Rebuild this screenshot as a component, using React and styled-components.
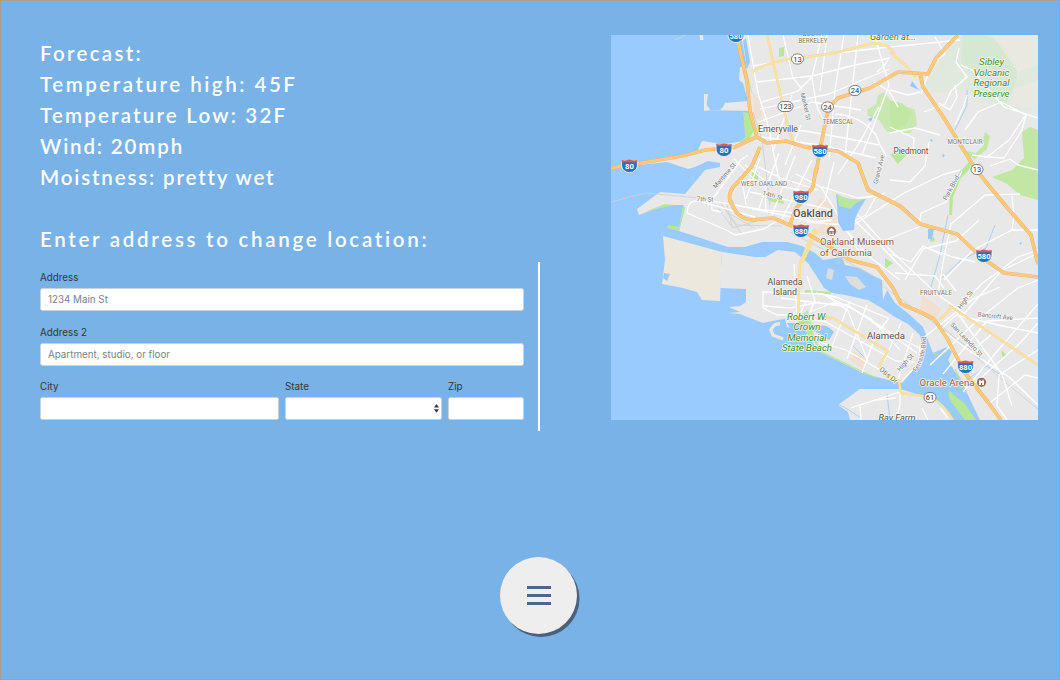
import React from "react";
import styled, { createGlobalStyle } from "styled-components";

const Global = createGlobalStyle`
  * { box-sizing: border-box; }
  body { margin: 0; background: #78b2e6; }
`;

const Page = styled.main`
  height: 680px;
  overflow: hidden;
  border: 1px solid #a0a0a0;
  background: #78b2e6;
  display: flex;
  flex-direction: column;
  justify-content: space-between;
  padding: 34px 21px 45px 39px;
  font-family: Inter, "Liberation Sans", sans-serif;
`;

const Columns = styled.div`
  display: flex;
  justify-content: space-between;
  align-items: flex-start;
`;

const LeftColumn = styled.section`
  width: 500px;
  padding-top: 3px;
`;

const Forecast = styled.div`
  height: 186px;
`;

const Line = styled.p`
  margin: 0;
  height: 31px;
  line-height: 31px;
  white-space: nowrap;
  color: #fff;
  font-family: Chalkduster, Lato, sans-serif;
  font-size: 20.5px;
  font-weight: 600;
  letter-spacing: ${(p) => p.$spacing}px;
`;

const Form = styled.form`
  margin-top: 7px;
  height: 169px;
  padding: 9px 14px 0 0;
  border-right: 2px solid #fff;
  display: flex;
  flex-direction: column;
  gap: 8.7px;
`;

const FieldRow = styled.div`
  display: grid;
  grid-template-columns: 239px 157px 76px;
  gap: 6px;
`;

const Field = styled.label`
  display: block;
  height: 46px;
  font-size: 9.8px;
  line-height: 13px;
  color: #353739;
`;

const Input = styled.input`
  display: block;
  width: 100%;
  height: 23px;
  margin-top: 4px;
  padding: 0 7px;
  border: 1px solid #c9d3dc;
  border-radius: 2.5px;
  background: #fff;
  font: 9.8px Inter, sans-serif;
  color: #464a4c;
  &::placeholder { color: #79838c; opacity: 1; }
`;

const SelectBox = styled.div`
  height: 23px;
  margin-top: 4px;
  padding-right: 2px;
  border: 1px solid #c9d3dc;
  border-radius: 2.5px;
  background: #fff;
  display: flex;
  align-items: center;
  justify-content: flex-end;
`;

const MapFrame = styled.div`
  width: 427px;
  height: 385px;
  overflow: hidden;
  svg { display: block; font-family: Roboto, sans-serif; }
`;

const Footer = styled.div`
  padding-left: 460px;
`;

const MenuButton = styled.button`
  display: grid;
  width: 77px;
  height: 77px;
  padding: 0;
  border: 0;
  border-radius: 50%;
  background: #eee;
  box-shadow: 2.5px 3px 0 #4b607a;
  place-content: center;
  gap: 4.6px;
`;

const Bar = styled.span`
  width: 24px;
  height: 3px;
  background: #4f6580;
`;

const minor = [
  "M748 35 L758 93 768 125 779 180", "M783 35 L793 78 M793 78 L802 89", "M753 66 L803 57 880 48 960 40",
  "M757 82 L812 76 855 65 890 58", "M762 102 L798 91 812 77 816 103 818 109 826 125", "M812 77 L822 35 M827 35 L820 91",
  "M844 35 L835 90 829 160", "M858 35 L850 110 845 155", "M876 40 L889 85 879 112 862 155", "M760 109 L829 94 889 69",
  "M759 122 L812 102 861 110", "M773 151 L792 95 M785 165 L801 125", "M760 127 L805 131 850 139 879 145",
  "M761 137 L820 145 876 158", "M835 114 Q862 116 876 135 L880 145 886 155 879 166", "M879 107 L858 145 838 174",
  "M745 165 L765 181 766 210", "M734 159 L758 183 M741 174 L746 205", "M735 205 L815 222 832 220",
  "M746 199 L760 158 M758 211 L779 153", "M772 215 L795 156 M782 219 L812 160", "M752 164 L781 178 818 190",
  "M748 179 L804 191 M750 192 L833 210", "M796 174 L821 187 835 210 861 255", "M834 162 L825 200 807 221",
  "M822 187 L858 198 876 196", "M807 222 L846 225 866 215 875 198 885 193", "M838 220 L867 255 900 280",
  "M844 210 L875 240 909 275", "M850 206 L890 250 938 295 964 313", "M855 224 L904 193 942 175 960 170",
  "M885 240 L919 227 921 213 946 202 962 171", "M938 295 L943 262 951 224 985 195 1020 194", "M890 254 L911 262 923 246 942 255",
  "M905 280 L923 249 956 241 979 220", "M895 273 L935 276 944 288", "M944 280 L973 250 1012 230 1038 230",
  "M924 247 L953 257 975 262", "M955 310 L984 282 1018 257 1038 250", "M943 274 L956 291",
  "M964 314 L1001 271 1038 253", "M930 365 L980 318 1018 288 1038 280", "M1012 230 L1014 216 1012 196",
  "M943 374 L987 321 1038 318", "M963 392 L999 349 1038 304", "M974 384 L1020 343 1038 323", "M923 338 L973 299 1000 287",
  "M940 330 L956 315 998 325 1038 333", "M941 329 L971 352 1009 377 1038 405", "M955 310 L1002 374 1012 406",
  "M999 375 L1038 350 M999 375 L997 406 1007 420", "M987 405 L1025 375 1038 378", "M970 353 L993 333",
  "M755 217 L702 202 Q688 197 687 213 L726 230 735 235 764 229 780 219", "M711 201 L765 210 826 216", "M711 201 L741 160 748 155 M711 200 L712 210 721 212",
  "M763 291 L763 308 777 315 800 314 806 301", "M794 264 L797 314", "M807 276 L815 301 809 314", "M764 292 L823 294 870 318 900 350",
  "M781 298 L850 307 893 334 923 350", "M764 306 L790 308 820 302", "M824 294 L848 311 868 362", "M810 312 L832 303 848 305 917 353",
  "M800 317 L826 322 896 361 915 362", "M816 293 L836 297 888 318", "M850 301 L831 349", "M867 305 L847 359", "M889 318 L876 335 862 373",
  "M901 323 L884 361 M913 333 L898 379", "M820 342 L846 350 899 381", "M902 381 L919 363 920 345",
  "M890 180 L910 182 925 166 929 142", "M890 90 L908 95 920 92",
  "M935 37 L945 54 932 63 921 94", "M959 48 L956 62 967 77 951 91 945 104 924 112", "M961 65 L972 70 1004 107 1038 118",
  "M967 95 L963 108 955 125", "M939 103 L950 110 957 97 955 85", "M965 130 L978 112 1001 102 1026 115 1022 130 1004 158 988 157",
  "M1025 116 L1009 140 987 157 972 155", "M990 166 L1010 159 1018 165 1038 170",
  "M888 60 Q883 68 877 72 M874 82 L889 91 898 107", "M890 133 L915 128 940 135", "M890 127 L914 138 913 154",
  "M860 405 L900 392 900 405 896 420", "M861 420 L860 406 M851 408 L875 400 896 398", "M922 408 L928 420 M940 408 L948 418"
];

const yellow = ["M767 35 L784 110 789 132 795 145", "M752 72 Q765 63 790 59 L835 53 873 43 Q888 44 895 53", "M890 52 L905 65 916 77",
  "M815 228 L800 263 798 317", "M818 230 L802 263", "M823 317 L833 318 884 349 888 351 879 366 881 370 899 381 901 393 930 397 Q944 404 953 420",
  "M939 320 L949 311 950 306 980 326 1038 365"];
const highways = [
  "M738 42 L747 81 750 111 757 137 767 143 786 141 805 147 818 149 838 151 858 163 868 190 900 206 920 224 957 234 980 256 1004 273 1038 277",
  "M611 168 L682 156 705 150 735 147 752 139 757 137",
  "M816 173 L820 150 826 119 830 106 838 98 870 88 898 72 928 74 936 58 958 35",
  "M920 74 L923 87 944 118 971 162 985 181 1010 211 1031 235 1038 264",
  "M731 204 Q726 192 738 182 L752 166 760 147",
  "M816 168 L813 187 795 210 790 225",
  "M731 201 Q736 219 753 220 L773 218 801 230 830 247 850 260 877 267 893 288 901 304 920 312 934 319 947 338 965 373 987 401 1001 420"
];

const Shield = ({ x, y, children }) => (
  <g transform={`translate(${x} ${y}) scale(1.1)`}>
    <path d="M-7-5 Q-8 2-5 4 Q-3 6 0 6 Q3 6 5 4 Q8 2 7-5Z" fill="#2871bd" stroke="#fff" strokeWidth=".7" />
    <path d="M-7-5.5 L-4-5 0-5.8 4-5 7-5.5 V-3.5 H-7Z" fill="#dc5854" />
    <text y="3" fontSize="7" fontWeight="700" textAnchor="middle" fill="#fff">{children}</text>
  </g>
);

const RoutePill = ({ x, y, w = 12, children }) => (
  <g transform={`translate(${x} ${y})`}>
    <rect x={-w / 2} y="-5" width={w} height="10" rx="5" fill="#fff" stroke="#666" strokeWidth=".8" />
    <text y="2.7" fontSize="7.5" textAnchor="middle" fill="#333">{children}</text>
  </g>
);

const Place = ({ x, y, size = 9.5, color = "#5c513c", angle = 0, italic, weight = 400, width, children }) => (
  <text transform={`translate(${x} ${y}) rotate(${angle})`} textAnchor="middle" fontSize={size}
    fontWeight={weight} fontStyle={italic ? "italic" : "normal"} fill={color} stroke="#f7f7f7"
    strokeWidth="1.5" paintOrder="stroke" strokeLinejoin="round"
    textLength={width} lengthAdjust="spacingAndGlyphs">{children}</text>
);

function OaklandMap() {
  return (
    <svg width="427" height="385" viewBox="611 35 427 385" aria-label="Oakland area map">
      <rect x="611" y="35" width="427" height="385" fill="#9acbff" />
      <path fill="#e8e8e8" d="M741 35 L747 68 740 67 739 80 743 83 748 101 725 103 723 107 720 110 710 110 705 102 708 94 705 94 704 110 750 111 751 123 750 133 743 141 720 145 715 143 702 141 698 150 688 154 611 168 667 162 685 160 695 167 708 161 720 163 720 167 705 170 685 194 660 192 637 209 639 215 665 205 683 205 685 208 679 231 728 247 745 247 762 242 787 242 802 246 815 253 823 260 842 257 845 265 860 268 872 275 882 280 883 300 887 290 895 303 910 315 923 327 929 343 933 353 947 347 952 352 948 360 955 372 960 377 967 393 980 420 1038 420 1038 35Z" />
      <path fill="#ece8dd" d="M663 236 L722 252 720 301 702 300 697 292 683 288 662 284 665 260Z M667 162 L686 159 695 167 688 169Z M704 94 L708 94 706 108 710 110 704 111Z" />
      <path fill="#e8e8e8" d="M722 252 L755 257 765 257 778 250 795 252 808 263 817 277 824 288 832 293 845 295 868 300 880 307 895 317 908 324 920 335 923 347 922 360 913 370 902 383 880 378 863 373 820 352 805 333 787 327 785 319 777 320 763 323 740 314 729 313 740 312 729 307 740 306 746 302 746 289 720 288Z M838 405 L842 402 860 389 900 389 937 400 953 420 850 420 848 412Z" />
      <path fill="#dcdede" d="M845 276 L857 277 866 287 859 290 850 284Z M828 268 L834 270 832 280 826 278Z" />

      <path fill="#c9e8b1" d="M867 110 L876 104 878 95 884 92 890 100 915 110 917 125 910 133 887 132 879 120 868 116Z" />
      <path fill="#dfeadd" d="M922 88 L940 61 952 45 963 35 1038 35 1038 110 1010 110 990 104 965 90 936 93Z" />
      <path fill="#c5e5bd" opacity=".35" d="M963 35 L985 35 Q1025 54 1015 85 L1004 108 961 63Z" />
      <path fill="#ebe9e4" opacity=".8" d="M992 35 H1038 V65 L1018 72Z M1016 88 L1038 80 1038 110 1008 105Z" />
      <path fill="#c0e8a2" d="M1022 132 L1030 127 1038 130 1038 200 1020 195 1007 184 992 177 1012 170 1024 158Z M890 101 L902 103 911 113 906 126 890 131Z M985 132 L990 136 987 149 975 159 963 153 966 151 976 153 984 145 983 140Z" />
      <path fill="#b8e798" d="M743 112 L750 113 754 130 749 140 740 142 745 137Z M683 205 L685 208 679 231 667 228 668 225 679 227Z M644 212 L665 204 675 205 660 208Z M779 48 L784 47 784 56 779 57Z M890 154 L909 152 898 164Z M969 162 L973 163 967 172 961 178 953 197 952 215 949 215 950 190 959 173Z M805 290 L832 292 831 294 805 294Z M797 320 L808 310 814 336 820 349 808 335Z M885 258 L893 263 885 269Z M948 390 L964 403 976 420 965 420 949 399Z M1001 350 L1007 355 1003 359Z M752 172 L758 173 758 180 751 178Z M764 192 L783 200 784 204 769 201Z M930 238 L934 237 935 241 930 242Z" />
      <path fill="none" stroke="#b5e595" strokeWidth="1.2" d="M820 351 L863 372 876 378 M933 353 L940 356 948 350 M955 369 L966 394" />
      <path fill="#f2ddca" opacity=".8" d="M753 92 L760 101 762 120 754 118Z M821 197 L834 207 837 225 820 222 812 209Z M853 351 L867 359 864 370 850 360Z M923 295 L941 309 937 318 920 310Z M813 233 L826 221 835 225 835 237Z" />
      <path fill="none" stroke="#ece8dd" strokeWidth="3.3" d="M780 324 Q774 323 771 330 L773 335 783 339 M701 35 L702 40" />
      <path fill="none" stroke="#a5ccf2" strokeWidth=".9" d="M948 215 L940 255 929 294 M995 225 L986 248 961 260 942 278 M967 90 L967 105 955 130 M833 402 L844 407 861 418 M887 394 L890 420 M965 381 L987 366 1004 377 M853 346 L864 357" />
      <g fill="none" stroke="#d0d1d2" strokeWidth=".9">
        <path d="M611 202 L645 193 700 198 727 204 732 227 M715 204 L733 228 760 220 M720 202 L741 233 M724 207 L737 225 782 226 M728 213 L755 228 M753 112 L762 140 770 205 M737 35 L752 93 M935 320 L1001 379 1038 409 M884 287 L972 350 M790 232 L872 275 M675 40 L686 35" />
      </g>
      <g fill="none" stroke="#fff" strokeWidth="1.3" strokeLinejoin="round">
        {minor.map((d) => <path key={d} d={d} />)}
      </g>
      <g fill="#99caff">
        <path d="M836 194 Q850 202 866 199 L859 210 855 219 854 230 843 231 838 222 837 204Z" />
        <path d="M928 229 L934 229 932 239 928 239Z M787 323 L804 323 807 334 792 332Z M813 330 Q824 320 834 332 L829 340Z M743 41 L746 38 750 62 747 69Z" />
        <path d="M912 81 L919 90 910 86Z M868 119 L873 117 871 122Z M664 273 L670 274 667 281 663 278Z M930 139 L933 140 931 142Z M942 154 L945 155 943 158Z M1019 243 L1022 242 1021 245Z" />
      </g>
      <path d="M837 194 Q851 202 865 199 L856 203 850 209 839 206Z" fill="#b9e6a0" />
      <g fill="none" strokeLinejoin="round">
        {yellow.map((d) => <g key={d}><path d={d} stroke="#f7d794" strokeWidth="2.4" /><path d={d} stroke="#fde49e" strokeWidth="1.4" /></g>)}
        {highways.map((d) => <g key={d}><path d={d} stroke="#f0b463" strokeWidth="3.7" /><path d={d} stroke="#ffcf83" strokeWidth="2.6" /><path d={d} stroke="#f4bb70" strokeWidth=".55" /></g>)}
      </g>

      <Shield x="736" y="36">580</Shield><Shield x="724" y="150">80</Shield><Shield x="629.5" y="166">80</Shield>
      <Shield x="820" y="151">580</Shield><Shield x="801" y="197">980</Shield><Shield x="801" y="231">880</Shield>
      <Shield x="984" y="256">580</Shield><Shield x="965.5" y="367">880</Shield>
      <RoutePill x="797.5" y="59">13</RoutePill><RoutePill x="785.5" y="106.5" w={15}>123</RoutePill>
      <RoutePill x="827.5" y="107">24</RoutePill><RoutePill x="855" y="90.5">24</RoutePill>
      <RoutePill x="977" y="169.5">13</RoutePill><RoutePill x="930" y="397.5">61</RoutePill>

      <Place x="813" y="36" size={6.5} color="#8d7558">SOUTH</Place>
      <Place x="813" y="43.2" size={6.5} color="#8d7558" width={29}>BERKELEY</Place>
      <Place x="893" y="39.6" size={9.5} color="#3b8b28" italic width={46}>Garden at...</Place>
      {["Sibley", "Volcanic", "Regional", "Preserve"].map((t, i) => <Place key={t} x="991.5" y={65.3 + i * 10.5} size={9.8} color="#3b8b28" italic width={[25, 36, 36, 36][i]}>{t}</Place>)}
      <Place x="778" y="131.5" width={40}>Emeryville</Place><Place x="911" y="153.5" width={35}>Piedmont</Place>
      <Place x="838" y="123.5" size={6.5} color="#8d7558" width={31}>TEMESCAL</Place>
      <Place x="965" y="144.3" size={6.5} color="#8d7558" width={35}>MONTCLAIR</Place>
      <Place x="764" y="185.5" size={6.5} color="#8d7558" width={46}>WEST OAKLAND</Place>
      <Place x="936" y="295" size={6.5} color="#8d7558" width={32}>FRUITVALE</Place>
      <Place x="813" y="217" size={11} weight={500} width={40}>Oakland</Place>
      <Place x="857" y="245.3" color="#8d5b42" width={74}>Oakland Museum</Place>
      <Place x="846" y="255.5" color="#8d5b42" width={52}>of California</Place>
      <Place x="785" y="285.3" width={35}>Alameda</Place><Place x="785" y="295" width={24}>Island</Place>
      <Place x="886" y="339" size={9.8} width={38}>Alameda</Place>
      {["Robert W.", "Crown", "Memorial", "State Beach"].map((t, i) => <Place key={t} x="807" y={319.5 + i * 10.6} size={9.8} color="#3b8b28" italic width={[40, 27, 39, 50][i]}>{t}</Place>)}
      <Place x="947" y="385.5" color="#8d5b42" width={55}>Oracle Arena</Place>
      <Place x="897" y="420.5" size={9.5} italic width={37}>Bay Farm</Place>
      <Place x="803.5" y="107" size={6.5} angle={77} color="#777">Market St</Place>
      <Place x="726" y="177" size={6.5} angle={-49} color="#777" width={31}>Maritime St</Place>
      <Place x="705" y="201.3" size={6.5} angle={2} color="#777">7th St</Place>
      <Place x="772" y="197.5" size={6.5} angle={16} color="#777">14th St</Place>
      <Place x="881" y="170" size={6.5} angle={-76} color="#777">Grand Ave</Place>
      <Place x="953" y="189" size={6.5} angle={-61} color="#777">Park Blvd</Place>
      <Place x="995" y="318.3" size={6.5} angle={6} color="#777" width={35}>Bancroft Ave</Place>
      <Place x="965" y="341" size={6.5} angle={47} color="#777">San Leandro St</Place>
      <Place x="967" y="301" size={6.5} angle={-53} color="#777">High St</Place>
      <Place x="907" y="364" size={6.5} angle={-48} color="#777">High St</Place>
      <path id="fernside" d="M916 372 Q927 359 926 330" fill="none" />
      <text fontSize="6.3" fill="#777" stroke="#f7f7f7" strokeWidth="1.2" paintOrder="stroke"><textPath href="#fernside">Fernside Blvd</textPath></text>
      <Place x="887" y="377" size={7} angle={39} color="#8d6a40">Otis Dr</Place>
      <g fill="#986d5b"><circle cx="831.5" cy="231.2" r="4.6" /><circle cx="981.5" cy="382.3" r="4.6" /></g>
      <g fill="#fff"><path d="M829 230 L831.5 228 834 230V231H829Z M829 234H834V235H829Z M829.5 231.5H830.5V234H829.5Z M832.5 231.5H833.5V234H832.5Z" />
        <path d="M979 385V381L980 379.5 981 381H982L983 379.5 984 381V385H982V383H981V385Z" /></g>
    </svg>
  );
}

const lines = [
  ["Forecast:", 2.3], ["Temperature high: 45F", 2.53], ["Temperature Low: 32F", 2.2],
  ["Wind: 20mph", 1.85], ["Moistness: pretty wet", 1.85]
];

export default function App() {
  return (
    <Page>
      <Global />
      <Columns>
        <LeftColumn>
          <Forecast>{lines.map(([text, spacing]) => <Line key={text} $spacing={spacing}>{text}</Line>)}</Forecast>
          <Line $spacing={2.72}>Enter address to change location:</Line>
          <Form>
            <Field>Address<Input placeholder="1234 Main St" /></Field>
            <Field>Address 2<Input placeholder="Apartment, studio, or floor" /></Field>
            <FieldRow>
              <Field>City<Input /></Field>
              <Field as="div">State<SelectBox role="combobox" aria-label="State">
                <svg width="5" height="9" viewBox="0 0 5 9" fill="#343a40"><path d="M0 3.5 2.5 0 5 3.5Z M0 5.2H5L2.5 8.7Z" /></svg>
              </SelectBox></Field>
              <Field>Zip<Input /></Field>
            </FieldRow>
          </Form>
        </LeftColumn>
        <MapFrame><OaklandMap /></MapFrame>
      </Columns>
      <Footer><MenuButton aria-label="Menu"><Bar /><Bar /><Bar /></MenuButton></Footer>
    </Page>
  );
}
